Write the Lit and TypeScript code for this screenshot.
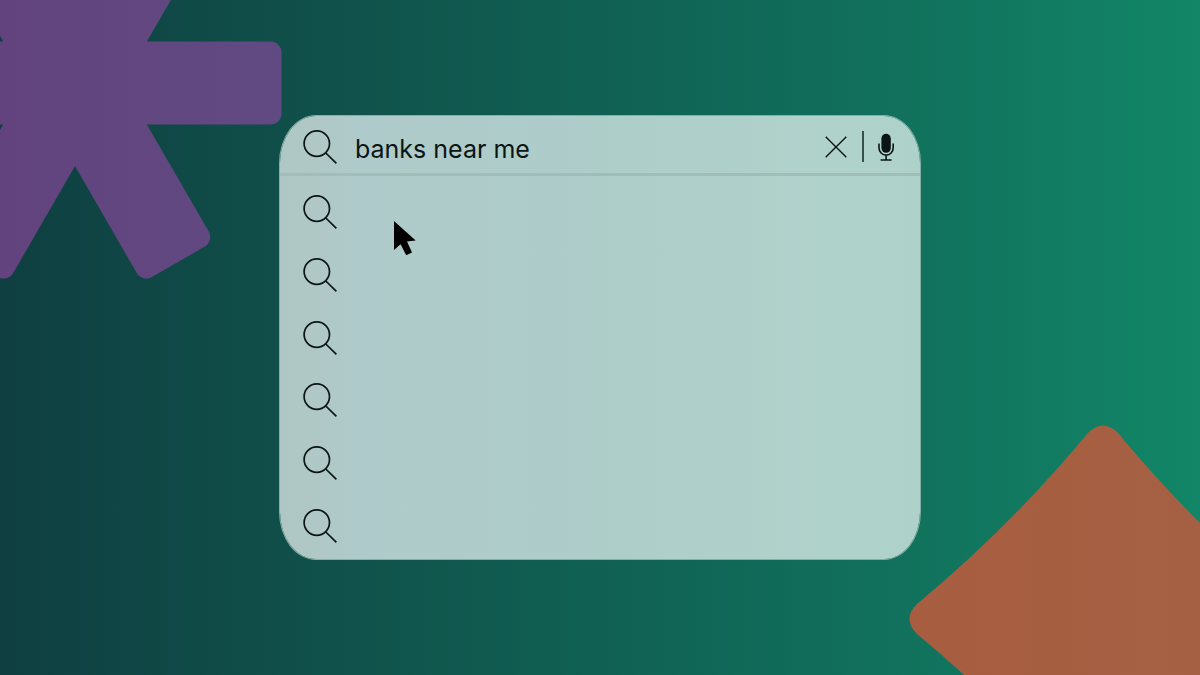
import { LitElement, html, css, svg } from "lit";
import { customElement, state } from "lit/decorators.js";

const magnifier = html`<svg class="magnifier" viewBox="0 0 34 34" aria-hidden="true">
  <circle cx="13.8" cy="13.6" r="12.7" />
  <path d="M22.8 23 33.4 33.4" />
</svg>`;

@customElement("app-root")
export class AppRoot extends LitElement {
  static styles = css`
    :host {
      display: block;
      font-family: Inter, "Liberation Sans", sans-serif;
      color: #0b1514;
    }
    .stage {
      position: relative;
      display: flex;
      align-items: center;
      justify-content: center;
      min-height: 100vh;
      overflow: hidden;
      background: linear-gradient(90deg, #0f3f41 0%, #104e49 23%, #106154 50%, #11715c 75%, #128667 100%);
    }
    .backdrop {
      position: absolute;
      inset: 0;
      width: 100%;
      height: 100%;
    }
    .panel {
      position: relative;
      box-sizing: border-box;
      width: min(642px, 92vw);
      border: 1px solid #84aea6;
      border-radius: 37px / 48px;
      background: linear-gradient(90deg, #afc7c4 0%, #afcaca 12%, #adcdc9 50%, #b0d2cb 82%, #aed2ca 100%);
      background-clip: padding-box;
      overflow: hidden;
    }
    .bar {
      display: flex;
      align-items: center;
      height: 53px;
      padding: 4px 26px 0 23px;
      border-bottom: 3px solid #a0bdb7;
    }
    .magnifier {
      display: block;
      flex: none;
      width: 34px;
      height: 34px;
      fill: none;
      stroke: #0b1514;
      stroke-width: 1.7;
    }
    .lookup {
      display: flex;
      flex: 1;
      align-items: center;
      gap: 18px;
      min-width: 0;
    }
    .field {
      flex: 1;
      min-width: 0;
      height: 40px;
      margin: 4px 0 0;
      padding: 0;
      border: 0;
      outline: 0;
      background: none;
      color: inherit;
      font: 400 25px/40px Inter, "Liberation Sans", sans-serif;
    }
    .tool {
      display: block;
      flex: none;
      padding: 0;
      border: 0;
      background: none;
      color: inherit;
      cursor: pointer;
    }
    .tool svg {
      display: block;
    }
    .rule {
      width: 2px;
      height: 31px;
      margin: 0 14px 0 15px;
      background: #37504d;
    }
    .results {
      display: grid;
      grid-auto-rows: 1fr;
      height: 376px;
      margin: 0;
      padding: 5px 23px 2px;
      list-style: none;
    }
    .result {
      display: flex;
      align-items: center;
    }
    .pointer {
      position: absolute;
      left: 114px;
      top: 104px;
      width: 24px;
      height: 36px;
      pointer-events: none;
    }
  `;

  @state() private query = "banks near me";

  private clear() {
    this.query = "";
  }

  private backdrop() {
    return html`<svg class="backdrop" viewBox="0 0 1200 675" preserveAspectRatio="xMidYMid slice" aria-hidden="true">
      <defs>
        <linearGradient id="violet" gradientUnits="userSpaceOnUse" x1="0" y1="0" x2="282" y2="0">
          <stop offset="0" stop-color="#62437d" />
          <stop offset="1" stop-color="#614a82" />
        </linearGradient>
        <linearGradient id="rust" gradientUnits="userSpaceOnUse" x1="910" y1="0" x2="1200" y2="0">
          <stop offset="0" stop-color="#a85d40" />
          <stop offset="1" stop-color="#a56043" />
        </linearGradient>
        <clipPath id="asterisk">
          ${[0, 60, 120].map(
            (a) => svg`<rect x="-131.5" y="41.5" width="413" height="83" rx="11" transform="rotate(${a} 75 83)" />`
          )}
        </clipPath>
      </defs>
      <rect x="-140" y="-140" width="440" height="440" fill="url(#violet)" clip-path="url(#asterisk)" />
      <path
        fill="url(#rust)"
        d="M917 604Q1010 527 1088 433Q1103 418 1118 433Q1196 527 1289 604Q1304 619 1289 634Q1196 711 1118 805Q1103 820 1088 805Q1010 711 917 634Q902 619 917 604Z"
      />
    </svg>`;
  }

  render() {
    return html`<main class="stage">
      ${this.backdrop()}
      <section class="panel">
        <div class="bar">
          <label class="lookup">
            ${magnifier}
            <input
              class="field"
              type="text"
              aria-label="Search"
              spellcheck="false"
              .value=${this.query}
              @input=${(e: Event) => (this.query = (e.target as HTMLInputElement).value)}
            />
          </label>
          <button class="tool" type="button" aria-label="Clear" @click=${this.clear}>
            <svg width="22" height="22" viewBox="0 0 22 22" fill="none" stroke="currentColor" stroke-width="1.4">
              <path d="M.7.7 21.3 21.3M21.3.7.7 21.3" />
            </svg>
          </button>
          <span class="rule"></span>
          <button class="tool" type="button" aria-label="Voice search">
            <svg width="16" height="28" viewBox="0 0 16 28" fill="none" stroke="currentColor" stroke-width="1.6">
              <rect x="3.4" y=".8" width="9.4" height="19" rx="4.7" fill="currentColor" stroke="none" />
              <path d="M1 10.5V15a7.1 7.1 0 0 0 14.2 0V10.5M8.1 22V26.4M2.6 27H13.6" />
            </svg>
          </button>
        </div>
        <ul class="results">
          ${Array.from({ length: 6 }, () => html`<li class="result">${magnifier}</li>`)}
        </ul>
        <svg class="pointer" viewBox="0 0 24 36" aria-hidden="true">
          <path d="M0 1V30L6.6 24.2 12.2 35.3 18 32.6 13 21.6 21.7 20.4Z" fill="#000" />
        </svg>
      </section>
    </main>`;
  }
}
